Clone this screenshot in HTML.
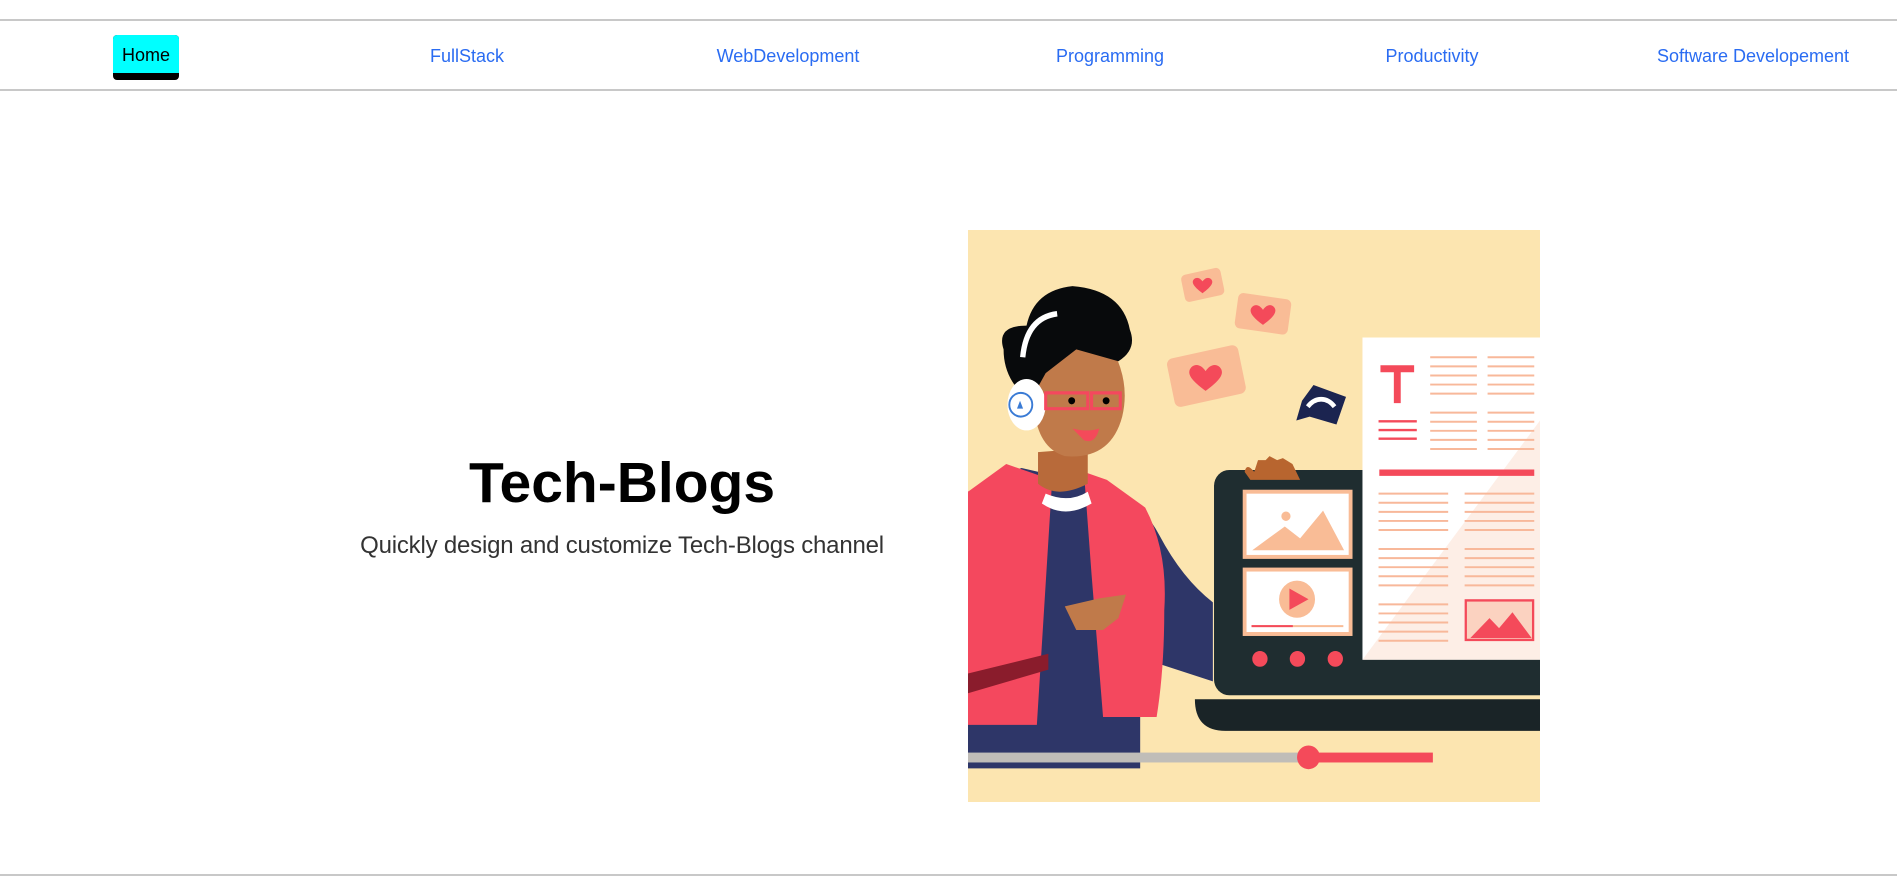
<!DOCTYPE html>
<html><head><meta charset="utf-8"><style>
*{margin:0;padding:0;box-sizing:border-box}
body{width:1897px;height:877px;background:#fff;font-family:"Liberation Sans",sans-serif;position:relative;overflow:hidden}
.line{position:absolute;left:0;width:1897px;height:2px;background:#c8c8c8}
.nav a{position:absolute;top:44px;font-size:18px;color:#2a6cf2;text-decoration:none;transform:translateX(-50%);white-space:nowrap;line-height:24px}
.home{position:absolute;left:113px;top:35px;width:66px;height:45px;background:#000;border-radius:4px}
.home div{height:38px;background:#00ffff;border-radius:4px 4px 0 0;font-size:18px;color:#000;text-align:center;line-height:40px}
h1{position:absolute;left:422px;width:400px;text-align:center;top:448px;font-size:57px;font-weight:bold;color:#000;line-height:70px}
p.sub{position:absolute;left:272px;width:700px;text-align:center;top:532px;font-size:24px;color:#333;letter-spacing:-0.2px}
svg{position:absolute;left:968px;top:230px}
</style></head><body>
<div class="line" style="top:19px"></div>
<div class="line" style="top:89px"></div>
<div class="home"><div>Home</div></div>
<div class="nav">
<a style="left:467px">FullStack</a>
<a style="left:788px">WebDevelopment</a>
<a style="left:1110px">Programming</a>
<a style="left:1432px">Productivity</a>
<a style="left:1753px">Software Developement</a>
</div>
<h1>Tech-Blogs</h1>
<p class="sub">Quickly design and customize Tech-Blogs channel</p>
<svg width="572" height="572" viewBox="47 78 1495 1447" preserveAspectRatio="none">
<rect x="47" y="78" width="1495" height="1447" fill="#fce5b0"/>
<!-- bubbles -->
<rect x="608" y="182" width="105" height="70" rx="12" fill="#f9bc96" transform="rotate(-12 660 217)"/>
<path d="M660 238c-25-18-30-28-22-36 8-6 16-2 22 6 6-8 14-12 22-6 8 8 3 18-22 36z" fill="#f44a5a"/>
<rect x="748" y="245" width="140" height="90" rx="14" fill="#f9bc96" transform="rotate(8 818 290)"/>
<path d="M818 318c-32-22-38-36-28-46 10-8 20-3 28 8 8-11 18-16 28-8 10 10 4 24-28 46z" fill="#f44a5a"/>
<rect x="575" y="385" width="190" height="125" rx="16" fill="#f9bc96" transform="rotate(-12 670 447)"/>
<path d="M668 485c-42-30-50-46-37-60 13-11 27-4 37 10 10-14 24-21 37-10 13 14 5 30-37 60z" fill="#f44a5a"/>
<path d="M920 510l30-40 85 30-25 70-70-20-35 10z" fill="#1b2450"/>
<path d="M935 525c20-25 50-25 70 0" stroke="#fff" stroke-width="12" fill="none"/>
<!-- laptop -->
<rect x="690" y="685" width="900" height="570" rx="40" fill="#1f2d30"/>
<path d="M640 1265h902v80H720q-80 0-80-80z" fill="#1a2427"/>
<rect x="770" y="740" width="277" height="165" fill="#fff" stroke="#f9bc96" stroke-width="10"/>
<path d="M790 888l85-60 40 30 60-70 55 100z" fill="#f9bc96"/><circle cx="878" cy="802" r="12" fill="#f9bc96"/>
<rect x="770" y="937" width="277" height="163" fill="#fff" stroke="#f9bc96" stroke-width="10"/>
<circle cx="907" cy="1012" r="47" fill="#f9bc96"/><path d="M887 985l50 27-50 27z" fill="#f44a5a"/>
<path d="M788 1080h240" stroke="#f9bc96" stroke-width="5"/><path d="M788 1080h108" stroke="#f44a5a" stroke-width="5"/>
<circle cx="810" cy="1163" r="20" fill="#f44a5a"/><circle cx="908" cy="1163" r="20" fill="#f44a5a"/><circle cx="1007" cy="1163" r="20" fill="#f44a5a"/>
<path d="M770 690q5-25 25 0l10-30 20 0 10-10 20 10 15-5 25 15 20 40h-130z" fill="#b8652f"/>
<!-- document -->
<rect x="1078" y="350" width="464" height="815" fill="#fff"/>
<path d="M1078 1165L1542 560V1165z" fill="#fdeee6"/>
<path d="M1125 420h88v18h-35v78h-18v-78h-35z" fill="#f44a5a"/>
<g stroke="#f44a5a" stroke-width="6"><path d="M1120 562h100M1120 584h100M1120 606h100"/></g>
<path d="M1122 692h405" stroke="#f44a5a" stroke-width="16"/>
<g stroke="#f8b89a" stroke-width="5">
<path d="M1255 400h122M1255 423h122M1255 446h122M1255 469h122M1255 492h122M1405 400h122M1405 423h122M1405 446h122M1405 469h122M1405 492h122M1255 540h122M1255 563h122M1255 586h122M1255 609h122M1255 632h122M1405 540h122M1405 563h122M1405 586h122M1405 609h122M1405 632h122"/>
<path d="M1120 745h182M1120 768h182M1120 791h182M1120 814h182M1120 837h182M1345 745h182M1345 768h182M1345 791h182M1345 814h182M1345 837h182M1120 885h182M1120 908h182M1120 931h182M1120 954h182M1120 977h182M1345 885h182M1345 908h182M1345 931h182M1345 954h182M1345 977h182M1120 1025h182M1120 1048h182M1120 1071h182M1120 1094h182M1120 1117h182"/>
</g>
<rect x="1348" y="1015" width="176" height="100" fill="#fbd2c0" stroke="#f44a5a" stroke-width="6"/>
<path d="M1360 1110l50-50 25 25 35-40 50 65z" fill="#f44a5a"/>
<!-- person -->
<path d="M47 740q80-40 140-60l180 40q120 20 180 130 60 110 140 170v200l-190-60v280H47z" fill="#2e3668"/>
<path d="M47 740l100-70 120 40-40 620H47z" fill="#f4485e"/>
<path d="M47 1200l210-50v40l-210 60z" fill="#8a1c2c"/>
<path d="M350 690l60 20 100 70q60 110 50 260 0 150-20 270H400l-30-360z" fill="#f4485e"/>
<path d="M230 720q50 40 130 0v-90l-130 10z" fill="#b86a3a"/>
<path d="M240 770q60 40 130 0l-10-30q-50 30-110 5z" fill="#fff"/>
<path d="M230 390q90-60 200 0 40 80 20 160-30 110-150 100-70-20-80-120z" fill="#c07a4a"/>
<path d="M140 380q-20-60 60-60 20-90 120-100 130 10 150 110 20 50-30 80l-110-30-80 60-40 70q-70-50-70-130z" fill="#080a0c"/>
<path d="M190 400q10-100 90-110" stroke="#fff" stroke-width="14" fill="none"/>
<ellipse cx="200" cy="520" rx="50" ry="65" fill="#fff"/><circle cx="185" cy="520" r="30" fill="#fff" stroke="#3a7bd5" stroke-width="5"/>
<path d="M175 530l8-20 8 20z" fill="#3a7bd5"/>
<path d="M250 490h110v40h-110zM370 490h75v40h-75z" fill="none" stroke="#f4485e" stroke-width="8"/>
<circle cx="318" cy="510" r="9" fill="#000"/><circle cx="408" cy="510" r="9" fill="#000"/>
<path d="M320 580q40 10 70 0-10 40-40 30z" fill="#f44a5a"/>
<path d="M300 1030l90-20 70-10-20 60 -40 30h-70z" fill="#c07a4a"/>
<!-- slider -->
<rect x="47" y="1400" width="890" height="25" fill="#c0bdb8"/>
<rect x="935" y="1400" width="327" height="25" fill="#f44a5a"/>
<circle cx="937" cy="1412" r="30" fill="#f44a5a"/>
</svg>
<div class="line" style="top:874px"></div>
</body></html>
